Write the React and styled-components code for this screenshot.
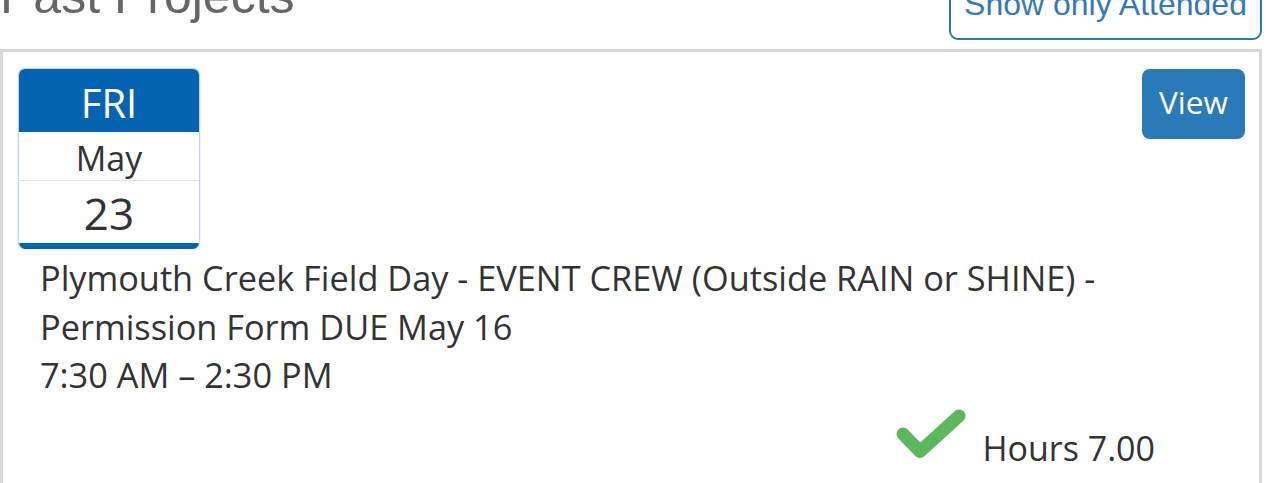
import React from "react";
import styled, { createGlobalStyle } from "styled-components";

const Global = createGlobalStyle`
  html, body { margin: 0; padding: 0; background: #fff; overflow: hidden; }
  body { font-family: "Open Sans", "Liberation Sans", sans-serif; color: #333; }
`;

const Page = styled.div`
  width: 1262px;
  margin-top: -29px;
`;

const Header = styled.div`
  display: flex;
  justify-content: space-between;
  align-items: flex-end;
  margin-bottom: 9px;
`;

const Title = styled.h2`
  margin: 0 0 19px;
  font-family: "Liberation Sans", Arial, sans-serif;
  font-weight: 400;
  font-size: 50px;
  line-height: 50px;
  color: #666;
`;

const OutlineButton = styled.button`
  font-family: "Liberation Sans", Arial, sans-serif;
  font-size: 32px;
  line-height: 41px;
  padding: 11px 0 13px;
  color: #337ab7;
  background: #fff;
  border: 2px solid #2e77ad;
  border-radius: 9px;
  width: 313px;
  white-space: nowrap;
`;

const Panel = styled.div`
  border: 3px solid #d8d8d8;
  border-bottom: none;
  padding: 16px 14px 0 15px;
  height: 500px;
`;

const TopRow = styled.div`
  display: flex;
  justify-content: space-between;
  align-items: flex-start;
`;

const DateCard = styled.div`
  width: 182px;
  box-sizing: border-box;
  border: 1px solid #c3d3e2;
  border-bottom: none;
  border-radius: 7px;
  overflow: hidden;
  display: flex;
  flex-direction: column;
  box-shadow: 0 0 2px rgba(90, 150, 210, 0.35);
`;

const DateCell = styled.div`
  box-sizing: border-box;
  height: ${(p) => p.$h}px;
  padding-top: ${(p) => p.$pt}px;
  display: flex;
  align-items: center;
  justify-content: center;
  font-size: ${(p) => p.$size}px;
  line-height: 1;
  color: ${(p) => (p.$head ? "#fff" : "#333")};
  background: ${(p) => (p.$head ? "#0564b1" : "#fff")};
  border-bottom: ${(p) => (p.$divider ? "1px solid #dbe5ee" : "none")};
`;

const DateBar = styled.div`
  height: 6px;
  background: #0564b1;
`;

const ViewButton = styled.button`
  margin-top: 1px;
  width: 103px;
  height: 70px;
  border: none;
  border-radius: 8px;
  background: #2a7aba;
  color: #fff;
  font-family: "Open Sans", "Liberation Sans", sans-serif;
  font-size: 31.5px;
  padding: 0 0 5px;
`;

const Description = styled.div`
  margin: 5px 0 0 22px;
  font-size: 34.3px;
  line-height: 48.5px;
  color: #333;
`;

const HoursRow = styled.div`
  display: flex;
  justify-content: flex-end;
  align-items: flex-end;
  gap: 16px;
  padding-right: 90px;
  margin-top: 8px;
`;

const Hours = styled.span`
  font-size: 34px;
  line-height: 40px;
  color: #333;
`;

const CheckIcon = styled.svg`
  flex: none;
  margin-bottom: 8px;
`;

const Check = () => (
  <CheckIcon width="70" height="52" viewBox="0 0 70 52">
    <path
      d="M7 26 L24 43.5 L63 8"
      fill="none"
      stroke="#5cb85c"
      strokeWidth="13"
      strokeLinecap="round"
      strokeLinejoin="round"
    />
  </CheckIcon>
);

export default function App() {
  return (
    <>
      <Global />
      <Page>
        <Header>
          <Title>Past Projects</Title>
          <OutlineButton>Show only Attended</OutlineButton>
        </Header>
        <Panel>
          <TopRow>
            <DateCard>
              <DateCell $h={63} $pt={5} $size={40} $head>FRI</DateCell>
              <DateCell $h={49} $pt={3} $size={34} $divider>May</DateCell>
              <DateCell $h={62} $pt={2} $size={44}>23</DateCell>
              <DateBar />
            </DateCard>
            <ViewButton>View</ViewButton>
          </TopRow>
          <Description>
            Plymouth Creek Field Day - EVENT CREW (Outside RAIN or SHINE) -
            <br />
            Permission Form DUE May 16
            <br />
            7:30 AM – 2:30 PM
          </Description>
          <HoursRow>
            <Check />
            <Hours>Hours 7.00</Hours>
          </HoursRow>
        </Panel>
      </Page>
    </>
  );
}
